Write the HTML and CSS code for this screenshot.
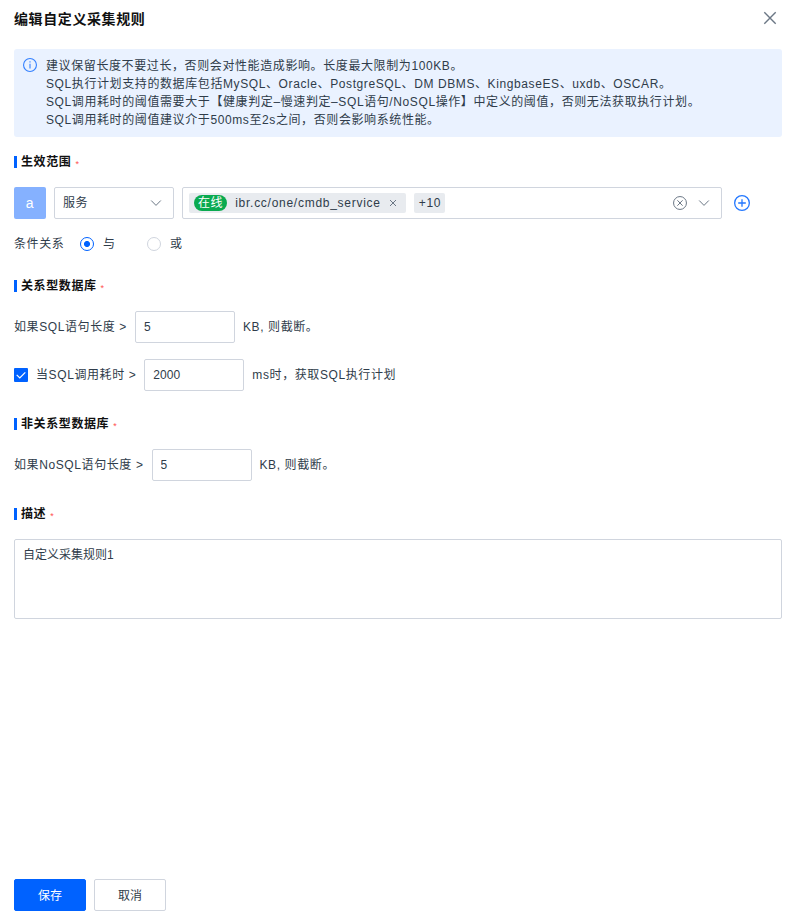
FILE: index.html
```
<!DOCTYPE html>
<html lang="zh-CN">
<head>
    <meta charset="UTF-8">
    <title>编辑自定义采集规则</title>
    <link rel="stylesheet" href="styles.css">
</head>
<body>
    <div class="drawer">
        <div class="header">
            <h2>编辑自定义采集规则</h2>
            <svg class="close" width="14" height="14" viewBox="0 0 14 14"><path d="M1.3 1.3l11.4 11.4M12.7 1.3L1.3 12.7"/></svg>
        </div>

        <div class="alert">
            <svg class="info" width="14" height="14" viewBox="0 0 14 14">
                <circle cx="7" cy="7" r="6.45"/>
                <path d="M7 5.7v4.8M7 3.2v1.4"/>
            </svg>
            <div>
                <p>建议保留长度不要过长，否则会对性能造成影响。长度最大限制为100KB。</p>
                <p>SQL执行计划支持的数据库包括MySQL、Oracle、PostgreSQL、DM DBMS、KingbaseES、uxdb、OSCAR。</p>
                <p>SQL调用耗时的阈值需要大于【健康判定–慢速判定–SQL语句/NoSQL操作】中定义的阈值，否则无法获取执行计划。</p>
                <p>SQL调用耗时的阈值建议介于500ms至2s之间，否则会影响系统性能。</p>
            </div>
        </div>

        <form id="ruleForm">
            <h3>生效范围<i>*</i></h3>
            <div class="row scope">
                <span class="letter">a</span>
                <div class="select type">
                    <span>服务</span>
                    <svg class="arrow" width="12" height="12" viewBox="0 0 12 12"><path d="M1.2 3.5L6 8.4l4.8-4.9"/></svg>
                </div>
                <div class="select services">
                    <span class="tag">
                        <b>在线</b>
                        <span>ibr.cc/one/cmdb_service</span>
                        <svg class="remove" width="8" height="8" viewBox="0 0 8 8"><path d="M1 1l6 6M7 1L1 7"/></svg>
                    </span>
                    <span class="tag more">+10</span>
                    <svg class="clear" width="14" height="14" viewBox="0 0 14 14">
                        <circle cx="7" cy="7" r="6.45"/>
                        <path d="M4.4 4.3l5.2 5.4M9.6 4.3L4.4 9.7"/>
                    </svg>
                    <svg class="arrow" width="12" height="12" viewBox="0 0 12 12"><path d="M1.2 3.5L6 8.4l4.8-4.9"/></svg>
                </div>
                <svg class="add" width="16" height="16" viewBox="0 0 16 16">
                    <circle cx="8" cy="8" r="7.35"/>
                    <path d="M8 4.2v7.6M4.2 8h7.6"/>
                </svg>
            </div>
            <div class="relation">
                <span class="name">条件关系</span>
                <label><input type="radio" name="relation" checked>与</label>
                <label><input type="radio" name="relation">或</label>
            </div>

            <h3>关系型数据库<i>*</i></h3>
            <div class="row">
                <span>如果SQL语句长度 &gt;</span>
                <input type="text" id="sqlLength" value="5">
                <span>KB, 则截断。</span>
            </div>
            <div class="row plan">
                <label class="check">
                    <input type="checkbox" checked>
                    <svg width="14" height="14" viewBox="0 0 14 14"><path d="M2.7 6.8l3.1 3.1 5.5-5.6"/></svg>
                </label>
                <span>当SQL调用耗时 &gt;</span>
                <input type="text" id="sqlTime" value="2000">
                <span>ms时，获取SQL执行计划</span>
            </div>

            <h3>非关系型数据库<i>*</i></h3>
            <div class="row">
                <span>如果NoSQL语句长度 &gt;</span>
                <input type="text" id="nosqlLength" value="5">
                <span>KB, 则截断。</span>
            </div>

            <h3>描述<i>*</i></h3>
            <textarea id="desc">自定义采集规则1</textarea>
        </form>

        <div class="footer">
            <button type="submit" form="ruleForm" class="primary">保存</button>
            <button type="button">取消</button>
        </div>
    </div>
</body>
</html>
```

FILE: styles.css
```
* {
    box-sizing: border-box;
}
body {
    margin: 0;
    font-family: "Liberation Sans", "Noto Sans CJK SC", sans-serif;
    font-size: 12px;
    line-height: 18px;
    letter-spacing: 0.6px;
    color: #2f3c4a;
    background: #fff;
}
h2, h3, p {
    margin: 0;
}
svg {
    display: block;
    flex: none;
    fill: none;
    stroke: #6b7785;
}
.drawer {
    display: flex;
    flex-direction: column;
    height: 100vh;
    padding: 0 5px 10px 14px;
}
.header {
    display: flex;
    justify-content: space-between;
    height: 49px;
    padding: 9px 5px 0 0;
}
.header h2 {
    font-size: 14px;
    line-height: 20px;
    color: #111;
}
.close {
    margin-top: 2px;
    stroke-width: 1.4;
}
.alert {
    display: flex;
    gap: 9px;
    height: 88px;
    padding: 8px 9px;
    border-radius: 3px;
    background: #eaf2ff;
    white-space: nowrap;
}
.info {
    margin-top: 1px;
    stroke: #3380ff;
    stroke-width: 1.1;
}
h3 {
    display: flex;
    align-items: center;
    height: 18px;
    margin: 24px 0 16px;
    font-size: 12px;
    color: #111;
}
h3:first-child {
    margin-top: 16px;
}
h3::before {
    content: "";
    width: 3px;
    height: 12px;
    margin-right: 4px;
    background: #0062ff;
}
h3 i {
    margin: 4px 0 0 4px;
    font-style: normal;
    font-weight: normal;
    font-size: 9px;
    color: #ff5050;
}
.row {
    display: flex;
    align-items: center;
    gap: 8px;
    height: 32px;
}
.letter {
    width: 32px;
    height: 32px;
    border-radius: 2px;
    background: #85b1ff;
    color: #fff;
    font-size: 14px;
    line-height: 32px;
    text-align: center;
}
.select {
    display: flex;
    align-items: center;
    height: 32px;
    border: 1px solid #d0d5de;
    border-radius: 2px;
}
.type {
    width: 120px;
    justify-content: space-between;
    padding: 0 11px 0 8px;
}
.services {
    width: 540px;
    padding: 0 11px 0 6px;
}
.tag {
    display: flex;
    align-items: center;
    height: 20px;
    margin-right: 8px;
    padding: 0 9px 0 5px;
    border-radius: 2px;
    background: #e8ebef;
    letter-spacing: 0.73px;
}
.tag b {
    height: 16px;
    margin-right: 8px;
    padding: 0 4px;
    border-radius: 8px;
    background: #0aaa50;
    color: #fff;
    font-weight: normal;
    line-height: 16px;
    letter-spacing: 0.6px;
}
.remove {
    margin-left: 8px;
}
.more {
    padding: 0 4px 0 5px;
}
.clear {
    margin: 0 11px 0 auto;
}
.add {
    margin-left: 4px;
    stroke: #2277ff;
    stroke-width: 1.3;
}
.relation {
    display: flex;
    height: 18px;
    margin-top: 16px;
}
.relation .name {
    width: 66px;
}
.relation label {
    display: flex;
    align-items: center;
    width: 67px;
}
input[type="radio"] {
    appearance: none;
    width: 14px;
    height: 14px;
    margin: 0 9px 0 0;
    border: 1px solid #d0d5de;
    border-radius: 50%;
}
input[type="radio"]:checked {
    border-color: #0062ff;
    background: radial-gradient(#0062ff 2.7px, #fff 3.3px);
}
input[type="text"], textarea {
    border: 1px solid #d0d5de;
    border-radius: 2px;
    outline: none;
    font-family: inherit;
    font-size: 12px;
    color: #2f3c4a;
}
input[type="text"] {
    width: 100px;
    height: 32px;
    padding: 0 8px;
}
.plan {
    margin-top: 16px;
}
.check {
    width: 14px;
    height: 14px;
    border-radius: 1px;
    background: #0062ff;
}
.check input {
    display: none;
}
.check svg {
    stroke: #fff;
    stroke-width: 1.2;
}
textarea {
    display: block;
    width: 768px;
    height: 80px;
    padding: 6px 8px;
    line-height: 18px;
    resize: none;
}
.footer {
    display: flex;
    gap: 8px;
    margin-top: auto;
}
button {
    width: 72px;
    height: 32px;
    padding: 0 0 2px;
    border: 1px solid #d0d5de;
    border-radius: 2px;
    background: #fff;
    color: #2f3c4a;
    font-family: inherit;
    font-size: 12px;
    cursor: pointer;
}
button.primary {
    border-color: #0062ff;
    background: #0062ff;
    color: #fff;
}
```
